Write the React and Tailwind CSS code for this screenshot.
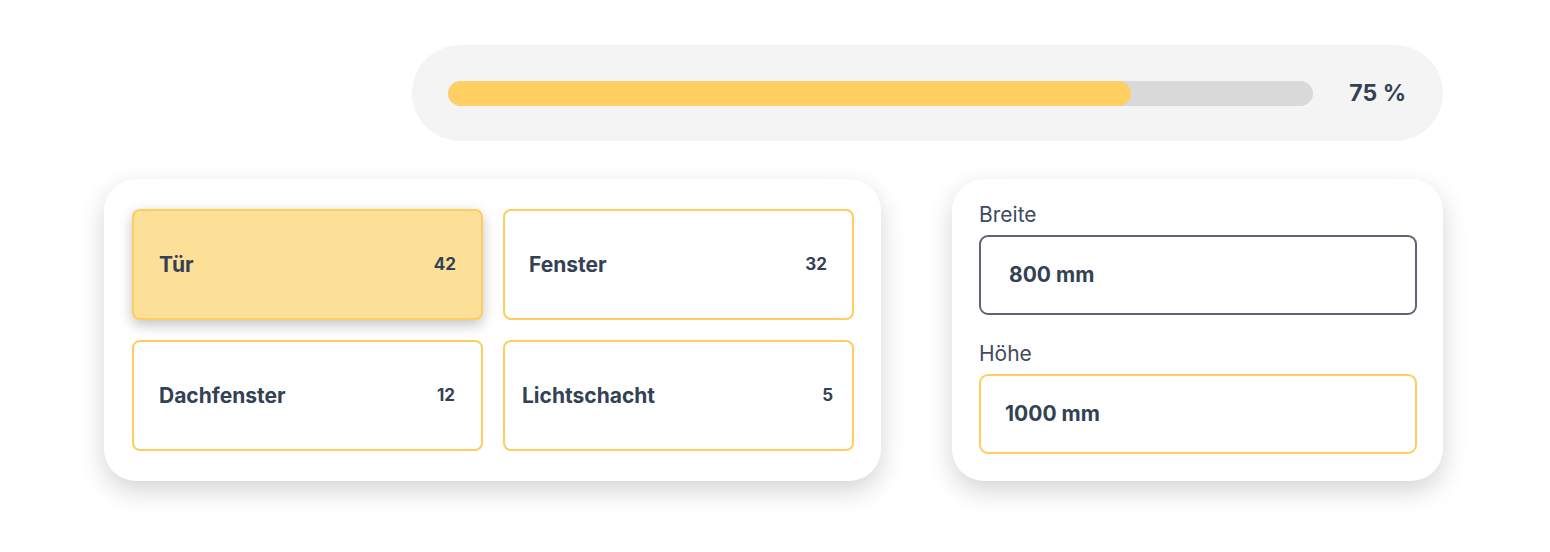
import React from "react";

const tiles = [
  { label: "Tür", count: 42, active: true, pad: "pl-[25px] pr-[25px]" },
  { label: "Fenster", count: 32, active: false, pad: "pl-[24px] pr-[25px]" },
  { label: "Dachfenster", count: 12, active: false, pad: "pl-[25px] pr-[26px]" },
  { label: "Lichtschacht", count: 5, active: false, pad: "pl-[17px] pr-[19px]" },
];

function Tile({ tile }) {
  return (
    <div
      className={`flex items-center justify-between h-[111px] rounded-[8px] border-2 border-[#ffcd5c] ${tile.pad} ${
        tile.active
          ? "bg-[#fde097] shadow-[0_5px_14px_rgba(0,0,0,0.24)]"
          : "bg-white"
      }`}
    >
      <span className="text-[21px] font-bold text-[#334155]">{tile.label}</span>
      <span className="text-[17px] font-bold text-[#334155]">{tile.count}</span>
    </div>
  );
}

function Field({ label, value, focused, first }) {
  return (
    <div className={first ? "" : "mt-[27px]"}>
      <div className="text-[21px] leading-[24px] text-[#3f4b5f]">{label}</div>
      <div
        className={`mt-[8px] h-[80px] flex items-center rounded-[9px] border-2 ${
          focused ? "border-[#5d6577] pl-[28px]" : "border-[#ffcd5c] pl-[24px]"
        }`}
      >
        <span className="text-[21px] font-bold text-[#334155]">{value}</span>
      </div>
    </div>
  );
}

export default function App() {
  return (
    <div
      className="w-[1550px] h-[552px] bg-white flex flex-col"
      style={{ fontFamily: "Inter, 'Noto Sans', sans-serif" }}
    >
      {/* Progress */}
      <div className="ml-[412px] mt-[45px] w-[1031px] h-[96px] rounded-full bg-[#f4f4f4] flex items-center pl-[36px] pr-[37px]">
        <div className="w-[865px] h-[25px] rounded-full bg-[#d9d9d9] overflow-hidden">
          <div className="w-[79%] h-full rounded-full bg-[#ffcf62]" />
        </div>
        <span className="ml-auto text-[23px] font-bold text-[#334155]">75 %</span>
      </div>

      {/* Cards row */}
      <div className="flex ml-[104px] mt-[38px] gap-[71px]">
        <div className="w-[777px] h-[302px] rounded-[32px] bg-white shadow-[0_10px_26px_rgba(0,0,0,0.17)] pt-[30px] pl-[28px] pr-[27px]">
          <div className="grid grid-cols-2 gap-x-[20px] gap-y-[20px]">
            {tiles.map((t) => (
              <Tile key={t.label} tile={t} />
            ))}
          </div>
        </div>

        <div className="w-[491px] h-[302px] rounded-[32px] bg-white shadow-[0_10px_26px_rgba(0,0,0,0.17)] pt-[24px] pl-[27px] pr-[26px]">
          <Field label="Breite" value="800 mm" focused first />
          <Field label="Höhe" value="1000 mm" />
        </div>
      </div>
    </div>
  );
}
